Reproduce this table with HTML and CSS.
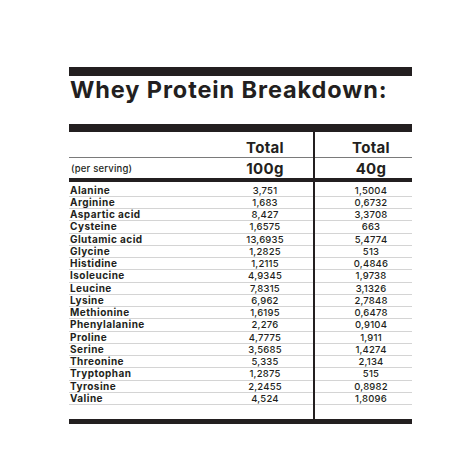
FILE: index.html
```html
<!DOCTYPE html>
<html lang="en">
<head>
<meta charset="utf-8">
<title>Whey Protein Breakdown</title>
<link rel="stylesheet" href="styles.css">
</head>
<body>
<div class="sheet">
  <div class="bar bar-top"></div>
  <h1 class="title">Whey Protein Breakdown:</h1>
  <div class="bar bar-mid"></div>
  <div class="table">
    <div class="col col-name">
      <div class="hcell"></div>
      <div class="scell serving">(per serving)</div>
      <div class="thick"></div>
      <div class="rows">
        <div class="cell name">Alanine</div>
        <div class="cell name">Arginine</div>
        <div class="cell name">Aspartic acid</div>
        <div class="cell name">Cysteine</div>
        <div class="cell name">Glutamic acid</div>
        <div class="cell name">Glycine</div>
        <div class="cell name">Histidine</div>
        <div class="cell name">Isoleucine</div>
        <div class="cell name">Leucine</div>
        <div class="cell name">Lysine</div>
        <div class="cell name">Methionine</div>
        <div class="cell name">Phenylalanine</div>
        <div class="cell name">Proline</div>
        <div class="cell name">Serine</div>
        <div class="cell name">Threonine</div>
        <div class="cell name">Tryptophan</div>
        <div class="cell name">Tyrosine</div>
        <div class="cell name">Valine</div>
      </div>
    </div>
    <div class="col col-a">
      <div class="hcell">Total</div>
      <div class="scell amount">100g</div>
      <div class="thick"></div>
      <div class="rows">
        <div class="cell val">3,751</div>
        <div class="cell val">1,683</div>
        <div class="cell val">8,427</div>
        <div class="cell val">1,6575</div>
        <div class="cell val">13,6935</div>
        <div class="cell val">1,2825</div>
        <div class="cell val">1,2115</div>
        <div class="cell val">4,9345</div>
        <div class="cell val">7,8315</div>
        <div class="cell val">6,962</div>
        <div class="cell val">1,6195</div>
        <div class="cell val">2,276</div>
        <div class="cell val">4,7775</div>
        <div class="cell val">3,5685</div>
        <div class="cell val">5,335</div>
        <div class="cell val">1,2875</div>
        <div class="cell val">2,2455</div>
        <div class="cell val">4,524</div>
      </div>
    </div>
    <div class="col col-b">
      <div class="hcell">Total</div>
      <div class="scell amount">40g</div>
      <div class="thick"></div>
      <div class="rows">
        <div class="cell val">1,5004</div>
        <div class="cell val">0,6732</div>
        <div class="cell val">3,3708</div>
        <div class="cell val">663</div>
        <div class="cell val">5,4774</div>
        <div class="cell val">513</div>
        <div class="cell val">0,4846</div>
        <div class="cell val">1,9738</div>
        <div class="cell val">3,1326</div>
        <div class="cell val">2,7848</div>
        <div class="cell val">0,6478</div>
        <div class="cell val">0,9104</div>
        <div class="cell val">1,911</div>
        <div class="cell val">1,4274</div>
        <div class="cell val">2,134</div>
        <div class="cell val">515</div>
        <div class="cell val">0,8982</div>
        <div class="cell val">1,8096</div>
      </div>
    </div>
  </div>
  <div class="bar bar-bottom"></div>
</div>
</body>
</html>
```
FILE: styles.css
```css
* { box-sizing: border-box; }
html, body { margin: 0; padding: 0; background: #ffffff; }
body {
  font-family: Inter, "Liberation Sans", sans-serif;
  color: #231f20;
}
.sheet {
  width: 343px;
  margin: 67px 0 0 69px;
}
.bar { background: #231f20; }
.bar-top { height: 9px; }
.bar-mid { height: 8px; }
.bar-bottom { height: 5px; }
.title {
  margin: 0;
  height: 48px;
  padding-top: 0;
  padding-left: 1px;
  font-size: 23.5px;
  line-height: 28px;
  font-weight: 700;
  letter-spacing: 0.9px;
  white-space: nowrap;
}
.table { display: flex; }
.col { display: flex; flex-direction: column; }
.col-name { width: 148px; }
.col-a { width: 96px; }
.col-b { flex: 1; border-left: 2px solid #231f20; }
.col-b .hcell, .col-b .scell, .col-b .cell { padding-left: 15px; }
.hcell {
  height: 26px;
  border-bottom: 1.5px solid #7a7a7a;
  padding-top: 7px;
  text-align: center;
  font-size: 15px;
  line-height: 18px;
  font-weight: 700;
  letter-spacing: 0.3px;
}
.scell {
  height: 20px;
  display: flex;
  align-items: center;
}
.serving {
  padding-left: 2px;
  font-size: 9.5px;
  font-weight: 500;
  letter-spacing: 0.2px;
}
.amount {
  justify-content: center;
  font-size: 15px;
  font-weight: 700;
  letter-spacing: 0.3px;
}
.thick { height: 4px; background: #231f20; }
.rows {
  padding-top: 2.5px;
  padding-bottom: 14px;
}
.cell {
  height: 12.25px;
  border-bottom: 1px solid #d4d4d4;
  line-height: 11.5px;
  white-space: nowrap;
}
.name {
  padding-left: 1px;
  font-size: 10px;
  font-weight: 700;
  letter-spacing: 0.45px;
}
.val {
  text-align: center;
  font-size: 9.5px;
  font-weight: 500;
  letter-spacing: 0.2px;
}
```
